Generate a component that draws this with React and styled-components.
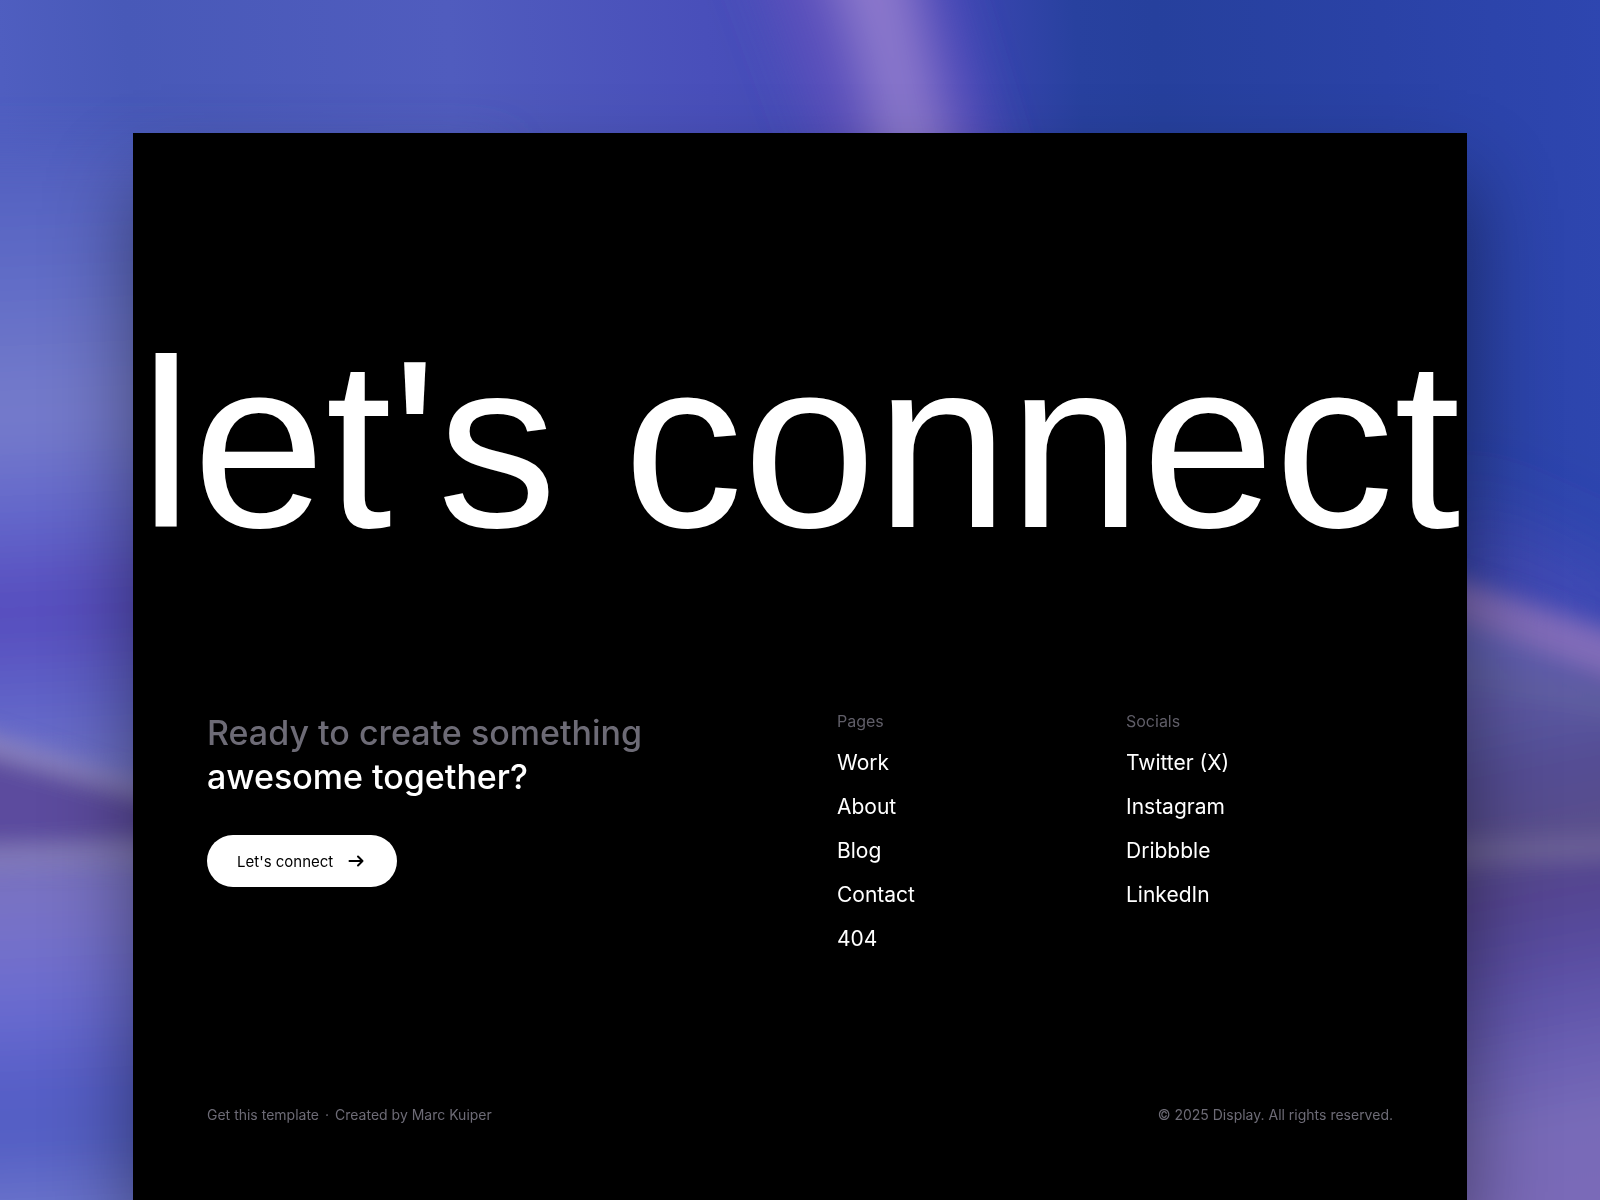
import React from "react";
import styled, { createGlobalStyle } from "styled-components";

const GlobalStyle = createGlobalStyle`
  *, *::before, *::after { box-sizing: border-box; }
  body {
    margin: 0;
    background: #4a52b8;
    font-family: Inter, "Liberation Sans", sans-serif;
    -webkit-font-smoothing: antialiased;
  }
`;

const Page = styled.div`
  position: relative;
  display: flex;
  flex-direction: column;
  min-height: 100vh;
  padding: 133px 133px 0;
  overflow: hidden;

  @media (max-width: 1100px) {
    padding: 48px 24px 0;
  }
`;

const Artwork = styled.svg`
  position: absolute;
  inset: 0;
  width: 100%;
  height: 100%;
`;

const Card = styled.main`
  position: relative;
  flex: 1;
  display: flex;
  flex-direction: column;
  background: #000;
  color: #fff;
  box-shadow: 0 48px 80px rgba(0, 0, 0, 0.45);
`;

const Hero = styled.h1`
  margin: 0;
  padding: 176px 0 124px;
  font-family: "Liberation Sans", Arial, sans-serif;
  font-size: 239px;
  font-weight: 400;
  line-height: 272px;
  text-align: center;
  white-space: nowrap;

  @media (max-width: 1500px) {
    font-size: 13vw;
    line-height: 1;
  }
`;

const Columns = styled.section`
  display: grid;
  grid-template-columns: 1fr 267px 267px;
  gap: 22px;
  padding: 0 74px;

  @media (max-width: 1100px) {
    grid-template-columns: 1fr 1fr;
  }
`;

const Intro = styled.div`
  display: flex;
  flex-direction: column;
  align-items: flex-start;
  gap: 36px;
  padding-top: 6px;
`;

const Heading = styled.h2`
  margin: 0;
  font-size: 34px;
  font-weight: 500;
  line-height: 44px;
`;

const Muted = styled.span`
  display: block;
  color: #6d6b76;
`;

const Button = styled.button`
  display: inline-flex;
  align-items: center;
  gap: 14px;
  height: 52px;
  padding: 0 32px 0 30px;
  border: 0;
  border-radius: 26px;
  background: #fff;
  color: #000;
  font-family: inherit;
  font-size: 15px;
  cursor: pointer;
`;

const LinkColumn = styled.nav`
  display: flex;
  flex-direction: column;
  padding-top: 6px;
`;

const ColumnTitle = styled.h3`
  margin: 0;
  color: #605e68;
  font-size: 16px;
  font-weight: 400;
  line-height: 20px;
`;

const LinkList = styled.ul`
  margin: 10px 0 0;
  padding: 0;
  list-style: none;
`;

const NavLink = styled.a`
  display: block;
  color: #fff;
  font-size: 21px;
  line-height: 44px;
  text-decoration: none;
`;

const BottomBar = styled.footer`
  display: flex;
  justify-content: space-between;
  gap: 24px;
  margin-top: 144px;
  padding: 0 74px 74px;
  color: #6d6b76;
  font-size: 14px;
  line-height: 20px;
`;

const Credits = styled.div`
  display: flex;
  gap: 6px;
`;

const CreditLink = styled.a`
  color: inherit;
  text-decoration: none;
`;

const pages = ["Work", "About", "Blog", "Contact", "404"];
const socials = ["Twitter (X)", "Instagram", "Dribbble", "LinkedIn"];

function Backdrop() {
  return (
    <Artwork viewBox="0 0 1600 1200" preserveAspectRatio="none" aria-hidden="true">
      <defs>
        <filter id="soft" filterUnits="userSpaceOnUse" x="-300" y="-300" width="2200" height="1800">
          <feGaussianBlur stdDeviation="42" />
        </filter>
        <filter id="medium" filterUnits="userSpaceOnUse" x="-300" y="-300" width="2200" height="1800">
          <feGaussianBlur stdDeviation="24" />
        </filter>
        <filter id="fine" filterUnits="userSpaceOnUse" x="-300" y="-300" width="2200" height="1800">
          <feGaussianBlur stdDeviation="11" />
        </filter>
        <linearGradient id="top" gradientUnits="userSpaceOnUse" x1="0" y1="60" x2="1600" y2="-60">
          <stop offset="0" stopColor="#4f5ec0" />
          <stop offset="0.08" stopColor="#4859b8" />
          <stop offset="0.28" stopColor="#505cbe" />
          <stop offset="0.44" stopColor="#494fba" />
          <stop offset="0.6" stopColor="#3c46b2" />
          <stop offset="0.67" stopColor="#28419f" />
          <stop offset="0.72" stopColor="#26409d" />
          <stop offset="0.86" stopColor="#2a42a6" />
          <stop offset="1" stopColor="#2e46b0" />
        </linearGradient>
        <linearGradient id="left" gradientUnits="userSpaceOnUse" x1="-25" y1="130" x2="25" y2="1200">
          <stop offset="0" stopColor="#4f5dbe" />
          <stop offset="0.13" stopColor="#5f6bc6" />
          <stop offset="0.27" stopColor="#767ccb" />
          <stop offset="0.36" stopColor="#6367cb" />
          <stop offset="0.45" stopColor="#564bbd" />
          <stop offset="0.54" stopColor="#6064c8" />
          <stop offset="0.6" stopColor="#7073c9" />
          <stop offset="0.68" stopColor="#7a73bd" />
          <stop offset="0.75" stopColor="#7671c9" />
          <stop offset="0.82" stopColor="#696bd0" />
          <stop offset="0.9" stopColor="#555dc6" />
          <stop offset="0.96" stopColor="#5560c4" />
          <stop offset="1" stopColor="#6a73cb" />
        </linearGradient>
        <linearGradient id="right" gradientUnits="userSpaceOnUse" x1="1500" y1="640" x2="1600" y2="1190">
          <stop offset="0" stopColor="#5f5fb0" />
          <stop offset="0.12" stopColor="#5b57a2" />
          <stop offset="0.25" stopColor="#544d93" />
          <stop offset="0.36" stopColor="#5a4f8c" />
          <stop offset="0.46" stopColor="#534491" />
          <stop offset="0.62" stopColor="#5c51a6" />
          <stop offset="0.76" stopColor="#6b60b3" />
          <stop offset="0.88" stopColor="#786bb8" />
          <stop offset="1" stopColor="#7a6bb8" />
        </linearGradient>
      </defs>
      <rect width="1600" height="1200" fill="url(#top)" />
      <g filter="url(#medium)">
        <path d="M-100 150H500V1300H-100Z" fill="url(#left)" />
      </g>
      <g filter="url(#soft)">
        <path d="M1440 500L1640 590V700L1440 640Z" fill="#5a50bd" opacity=".55" />
      </g>
      <g filter="url(#medium)">
        <path d="M745 -60H930L1010 200H840Z" fill="#6552bd" opacity=".7" />
        <path d="M818 -60H900Q925 60 955 200H888Q870 60 818 -60Z" fill="#9380cf" opacity=".9" />
      </g>
      <g filter="url(#fine)">
        <path d="M-50 722L180 795V812L-50 745Z" fill="#8c83bd" />
        <path d="M-50 744L180 808V840L-50 846Z" fill="#5b4c9e" />
        <path d="M-50 848L180 838V862L-50 866Z" fill="#8279b6" />
        <path d="M1400 592L1700 684V1300H1400Z" fill="url(#right)" />
        <path d="M1400 560L1700 660V710L1400 596Z" fill="#866fb9" opacity=".9" />
        <path d="M1400 646L1700 720V740L1400 664Z" fill="#66689f" opacity=".5" />
        <path d="M1400 844L1700 834V854L1400 866Z" fill="#746a9c" opacity=".75" />
      </g>
    </Artwork>
  );
}

function Links({ title, items }) {
  return (
    <LinkColumn aria-label={title}>
      <ColumnTitle>{title}</ColumnTitle>
      <LinkList>
        {items.map((item) => (
          <li key={item}>
            <NavLink href="#">{item}</NavLink>
          </li>
        ))}
      </LinkList>
    </LinkColumn>
  );
}

export default function App() {
  return (
    <>
      <GlobalStyle />
      <Page>
        <Backdrop />
        <Card>
          <Hero>let's connect</Hero>
          <Columns>
            <Intro>
              <Heading>
                <Muted>Ready to create something</Muted>
                awesome together?
              </Heading>
              <Button type="button">
                Let's connect
                <svg width="18" height="18" viewBox="0 0 18 18" fill="none" stroke="currentColor" strokeWidth="2" strokeLinecap="round" strokeLinejoin="round" aria-hidden="true">
                  <path d="M2.5 9H15.5M11 4.5L15.5 9L11 13.5" />
                </svg>
              </Button>
            </Intro>
            <Links title="Pages" items={pages} />
            <Links title="Socials" items={socials} />
          </Columns>
          <BottomBar>
            <Credits>
              <CreditLink href="#">Get this template</CreditLink>
              <span>·</span>
              <CreditLink href="#">Created by Marc Kuiper</CreditLink>
            </Credits>
            <span>© 2025 Display. All rights reserved.</span>
          </BottomBar>
        </Card>
      </Page>
    </>
  );
}
